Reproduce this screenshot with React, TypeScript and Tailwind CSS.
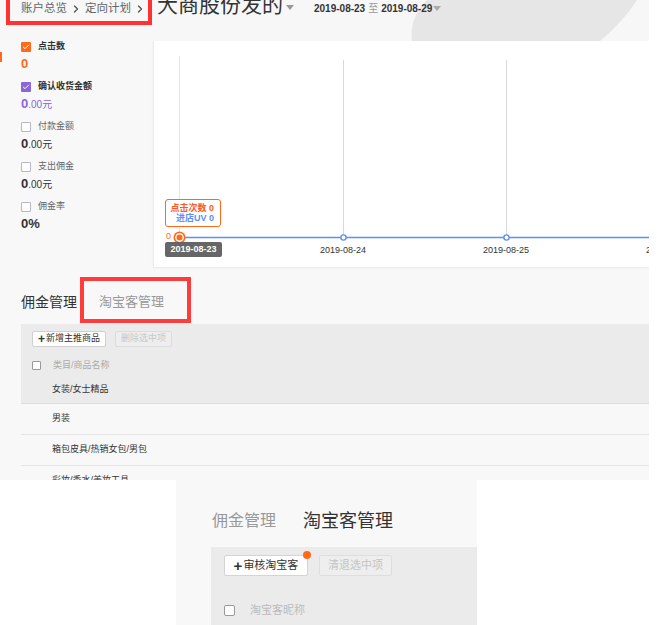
import React from 'react';
import { ChevronRight, Check } from 'lucide-react';

type BoxState = 'orange' | 'purple' | 'off';

function Box({ state }: { state: BoxState }) {
  if (state === 'off') {
    return <span className="w-[10px] h-[10px] shrink-0 border border-[#b8b6c8] bg-white rounded-[1px]" />;
  }
  return (
    <span
      className={`w-[10px] h-[10px] shrink-0 flex items-center justify-center rounded-[1px] ${state === 'orange' ? 'bg-[#ff6a1a]' : 'bg-[#8a66d6]'}`}
    >
      <Check className="w-[8px] h-[8px] text-white" strokeWidth={3} />
    </span>
  );
}

function Money({ color }: { color: string }) {
  return (
    <span className={color}>
      <span className="text-[13px] font-bold">0</span>
      <span className="text-[10px]">.00元</span>
    </span>
  );
}

const metrics: Array<{ label: string; state: BoxState; value: React.ReactNode }> = [
  { label: '点击数', state: 'orange', value: <span className="text-[13px] font-bold text-[#ff6a1a]">0</span> },
  { label: '确认收货金额', state: 'purple', value: <Money color="text-[#8a66d6]" /> },
  { label: '付款金额', state: 'off', value: <Money color="text-[#333]" /> },
  { label: '支出佣金', state: 'off', value: <Money color="text-[#333]" /> },
  { label: '佣金率', state: 'off', value: <span className="text-[13px] font-bold text-[#333]">0%</span> },
];

const rows = ['女装/女士精品', '男装', '箱包皮具/热销女包/男包', '彩妆/香水/美妆工具'];

function Chart() {
  return (
    <div className="relative flex-1 h-[226px] bg-white overflow-hidden border-l border-[#ececec] shadow-[0_1px_2px_rgba(0,0,0,0.06)]">
      <svg width="496" height="226" className="absolute left-0 top-0">
        <line x1="25.5" y1="15" x2="25.5" y2="196" stroke="#e6e6e6" />
        {[189, 352, 515].map((x) => (
          <line key={x} x1={x + 0.5} y1="19" x2={x + 0.5} y2="196" stroke="#d9d9d9" />
        ))}
        <line x1="25" y1="196.5" x2="496" y2="196.5" stroke="#5b8ff9" strokeWidth="1.5" />
        {[189, 352].map((x) => (
          <circle key={x} cx={x + 0.5} cy="196.5" r="2.6" fill="#fff" stroke="#5b8ff9" strokeWidth="1.4" />
        ))}
        <circle cx="25.5" cy="196.5" r="6" fill="#ff6a1a" />
        <circle cx="25.5" cy="196.5" r="4.4" fill="#fff" />
        <circle cx="25.5" cy="196.5" r="3" fill="#ff6a1a" />
        <text x="17" y="198" textAnchor="end" fontSize="9" fill="#ff6a1a" fontFamily="Liberation Sans, sans-serif">0</text>
        {[
          [189, '2019-08-24'],
          [352, '2019-08-25'],
          [515, '2019-08-26'],
        ].map(([x, t]) => (
          <text key={t as string} x={x as number} y="212" textAnchor="middle" fontSize="9" fill="#333" fontFamily="Liberation Sans, sans-serif">
            {t}
          </text>
        ))}
      </svg>
      {/* tooltip */}
      <div className="absolute left-[11px] top-[158px] w-[56px] h-[28px] rounded-[3px] border border-[#ff6a1a] bg-white flex flex-col justify-center items-end pr-[6px] text-[9px] leading-[10px] font-bold">
        <span className="text-[#ff5a1a]">点击次数 0</span>
        <span className="text-[#5b8ff9]">进店UV 0</span>
      </div>
      <div className="absolute left-[11px] top-[201px] w-[57px] h-[15px] rounded-[2px] bg-[#666] text-white text-[9px] font-bold flex items-center justify-center">
        2019-08-23
      </div>
    </div>
  );
}

export default function App() {
  return (
    <div className="w-[657px] h-[625px] bg-white overflow-hidden font-['Liberation_Sans','Noto_Sans_CJK_SC',sans-serif] text-[#333]">
      {/* first capture */}
      <div className="relative w-[649px] h-[480px] bg-[#f8f8f8] overflow-hidden flex flex-col">
        <header className="relative h-[41px] shrink-0 bg-[#f7f7f7]">
          <svg width="649" height="41" className="absolute left-0 top-0">
            <path d="M427 0 Q409 18 412 41 L600 41 Q623 22 637 0 Z" fill="#e6e6e6" />
          </svg>
          <div className="relative flex items-center h-[16px]">
            <div className="flex items-center pl-[21px] mt-[2px] text-[11.5px] text-[#666]">
              <span>账户总览</span>
              <ChevronRight className="w-[12px] h-[12px] mx-[3px] text-[#555]" strokeWidth={2.75} />
              <span>定向计划</span>
              <ChevronRight className="w-[12px] h-[12px] ml-[3px] text-[#555]" strokeWidth={2.75} />
            </div>
            <span className="ml-[11px] -mt-[7px] text-[21px] leading-[21px] text-[#333]">大商股份发的</span>
            <svg width="8" height="5" className="ml-[3px] mt-[-2px]">
              <path d="M0 0 L8 0 L4 5 Z" fill="#999" />
            </svg>
            <div className="ml-[20px] flex items-center text-[10px] font-bold text-[#333]">
              <span>2019-08-23</span>
              <span className="mx-[3px] font-normal text-[#999]">至</span>
              <span>2019-08-29</span>
              <svg width="8" height="5" className="ml-[1px]">
                <path d="M0 0 L8 0 L4 5 Z" fill="#aaa" />
              </svg>
            </div>
          </div>
          <div className="absolute left-[6px] top-[-4px] w-[146px] h-[29px] border-4 border-[#ff3131]" />
        </header>

        <div className="flex">
          <div className="relative w-[153px] shrink-0">
            <div className="absolute left-0 top-[11px] w-[2px] h-[10px] bg-[#ff6a1a]" />
            {metrics.map((m) => (
              <div key={m.label} className="h-[40px] pl-[21px]">
                <div className="flex items-center gap-[7px] h-[11px]">
                  <Box state={m.state} />
                  <span className={`text-[9px] ${m.state === 'off' ? 'text-[#666]' : 'text-[#333] font-bold'}`}>{m.label}</span>
                </div>
                <div className="h-[16px] mt-[3px] flex items-center leading-none">{m.value}</div>
              </div>
            ))}
          </div>
          <Chart />
        </div>

        <div className="relative h-[57px] shrink-0 pl-[21px] pt-[28px] flex items-start gap-[22px]">
          <span className="text-[14px] leading-[14px] text-[#333]">佣金管理</span>
          <span className="text-[13px] leading-[14px] text-[#999]">淘宝客管理</span>
          <div className="absolute left-[80px] top-[10px] w-[111px] h-[46px] border-4 border-[#ff3b3b]" />
        </div>

        <div className="ml-[21px]">
          <div className="bg-[#ebebeb]">
            <div className="h-[30px] flex items-center pl-[11px] gap-[9px] text-[9px]">
              <span className="h-[16px] w-[74px] flex items-center justify-center bg-white border border-[#cfcfcf] rounded-[2px] text-[#333]">
                <span className="font-bold text-[12px] leading-none mr-[1px]">+</span>新增主推商品
              </span>
              <span className="h-[16px] w-[57px] flex items-center justify-center bg-[#eeeeee] border border-[#dcdcdc] rounded-[2px] text-[#c8c8c8]">
                删除选中项
              </span>
            </div>
            <div className="h-[23px] flex items-center pl-[11px] gap-[12px]">
              <span className="w-[9px] h-[9px] border border-[#999] bg-white rounded-[1px]" />
              <span className="text-[9px] text-[#aaa]">类目/商品名称</span>
            </div>
          </div>
          {rows.map((r, i) => (
            <div
              key={r}
              className={`flex items-center pl-[31px] text-[9px] text-[#333] border-b ${i === 0 ? 'h-[27px] bg-[#ebebeb] border-[#dedede]' : 'h-[31px] bg-[#f8f8f8] border-[#e4e4e4]'}`}
            >
              {r}
            </div>
          ))}
        </div>
      </div>

      {/* second capture */}
      <div className="ml-[176px] w-[301px] h-[145px] bg-[#f8f8f8] flex flex-col">
        <div className="h-[67px] shrink-0 flex items-center gap-[27px] pl-[36px] pt-[14px]">
          <span className="text-[16px] leading-[18px] text-[#999]">佣金管理</span>
          <span className="text-[18px] leading-[18px] text-[#333]">淘宝客管理</span>
        </div>
        <div className="ml-[35px] flex-1 bg-[#ebebeb] pl-[13px] pt-[8px]">
          <div className="flex items-center gap-[11px]">
            <span className="relative h-[21px] w-[84px] flex items-center justify-center bg-white border border-[#d4d4d4] rounded-[2px] text-[11px] text-[#333]">
              <span className="font-bold text-[15px] leading-none mr-[1px]">+</span>审核淘宝客
              <span className="absolute right-[-4px] top-[-5px] w-[8px] h-[8px] rounded-full bg-[#ff6a1a]" />
            </span>
            <span className="h-[21px] w-[73px] flex items-center justify-center bg-[#eeeeee] border border-[#dedede] rounded-[2px] text-[11px] text-[#c4c4c4]">
              清退选中项
            </span>
          </div>
          <div className="flex items-center gap-[15px] mt-[26px]">
            <span className="w-[11px] h-[11px] border border-[#999] bg-white rounded-[2px]" />
            <span className="text-[11px] text-[#bbb]">淘宝客昵称</span>
          </div>
        </div>
      </div>
    </div>
  );
}
